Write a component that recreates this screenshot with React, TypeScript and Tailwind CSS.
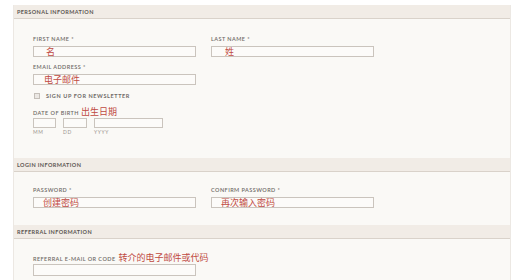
import React from "react";

const lbl = "text-[5.5px] leading-[6px] tracking-[0.45px] text-[#6f6a66] uppercase font-semibold";
const cn = "text-[9px] leading-[10px] text-[#bf4a42]";
const input = "h-[11px] border border-[#cac4bd] bg-[#fcfbf9] flex items-center";
const small = "text-[5px] leading-[6px] tracking-[0.6px] text-[#9a958f] mt-[1px]";

function Header({ title }: { title: string }) {
  return (
    <div className="h-[14px] bg-[#f1ece6] border-b border-[#d9d2ca] flex items-center pl-[3px]">
      <span className="text-[5.5px] leading-[6px] tracking-[0.4px] font-bold text-[#5c5752] uppercase">{title}</span>
    </div>
  );
}

export default function App() {
  return (
    <div
      className="w-[523px] h-[280px] bg-white pt-[5px] pl-[13px] overflow-hidden"
      style={{ fontFamily: "Lato, 'Noto Sans CJK SC', sans-serif" }}
    >
      <div className="w-[498px] h-[275px] bg-[#faf9f6] border-l border-r border-[#ece8e3]">
        <Header title="Personal Information" />
        <div className="h-[139px] pl-[19px] pt-[17px]">
          <div className="flex gap-[15px]">
            <div className="w-[163px]">
              <div className={lbl}>First Name *</div>
              <div className={`${input} mt-[4px] pl-[12px]`}>
                <span className={cn}>名</span>
              </div>
            </div>
            <div className="w-[163px]">
              <div className={lbl}>Last Name *</div>
              <div className={`${input} mt-[4px] pl-[13px]`}>
                <span className={cn}>姓</span>
              </div>
            </div>
          </div>
          <div className="w-[163px] mt-[7px]">
            <div className={lbl}>Email Address *</div>
            <div className={`${input} mt-[4px] pl-[10px]`}>
              <span className={cn}>电子邮件</span>
            </div>
          </div>
          <div className="flex items-center mt-[8px] gap-[6px] pl-[1px]">
            <div className="w-[6px] h-[6px] border border-[#c4bfb9] bg-[#ebe8e4]" />
            <span className="text-[5.5px] leading-[6px] tracking-[0.6px] font-bold text-[#6f6a66] uppercase">
              Sign up for newsletter
            </span>
          </div>
          <div className="flex items-end mt-[8px] gap-[2px]">
            <span className={`${lbl} mb-[1px]`}>Date of Birth</span>
            <span className={cn}>出生日期</span>
          </div>
          <div className="flex gap-[7px] mt-[1px]">
            <div>
              <div className="w-[23px] h-[10px] border border-[#cac4bd] bg-[#fcfbf9]" />
              <div className={small}>MM</div>
            </div>
            <div>
              <div className="w-[24px] h-[10px] border border-[#cac4bd] bg-[#fcfbf9]" />
              <div className={small}>DD</div>
            </div>
            <div>
              <div className="w-[69px] h-[10px] border border-[#cac4bd] bg-[#fcfbf9]" />
              <div className={small}>YYYY</div>
            </div>
          </div>
        </div>
        <Header title="Login Information" />
        <div className="h-[53px] pl-[19px] pt-[15px]">
          <div className="flex gap-[15px]">
            <div className="w-[163px]">
              <div className={lbl}>Password *</div>
              <div className={`${input} mt-[4px] pl-[9px]`}>
                <span className={cn}>创建密码</span>
              </div>
            </div>
            <div className="w-[163px]">
              <div className={lbl}>Confirm Password *</div>
              <div className={`${input} mt-[4px] pl-[9px]`}>
                <span className={cn}>再次输入密码</span>
              </div>
            </div>
          </div>
        </div>
        <Header title="Referral Information" />
        <div className="pl-[19px] pt-[14px]">
          <div className="flex items-end gap-[3px]">
            <span className={`${lbl} mb-[1px]`}>Referral E-mail or Code</span>
            <span className={cn}>转介的电子邮件或代码</span>
          </div>
          <div className={`${input} w-[163px] h-[12px] mt-[1px]`} />
        </div>
      </div>
    </div>
  );
}
